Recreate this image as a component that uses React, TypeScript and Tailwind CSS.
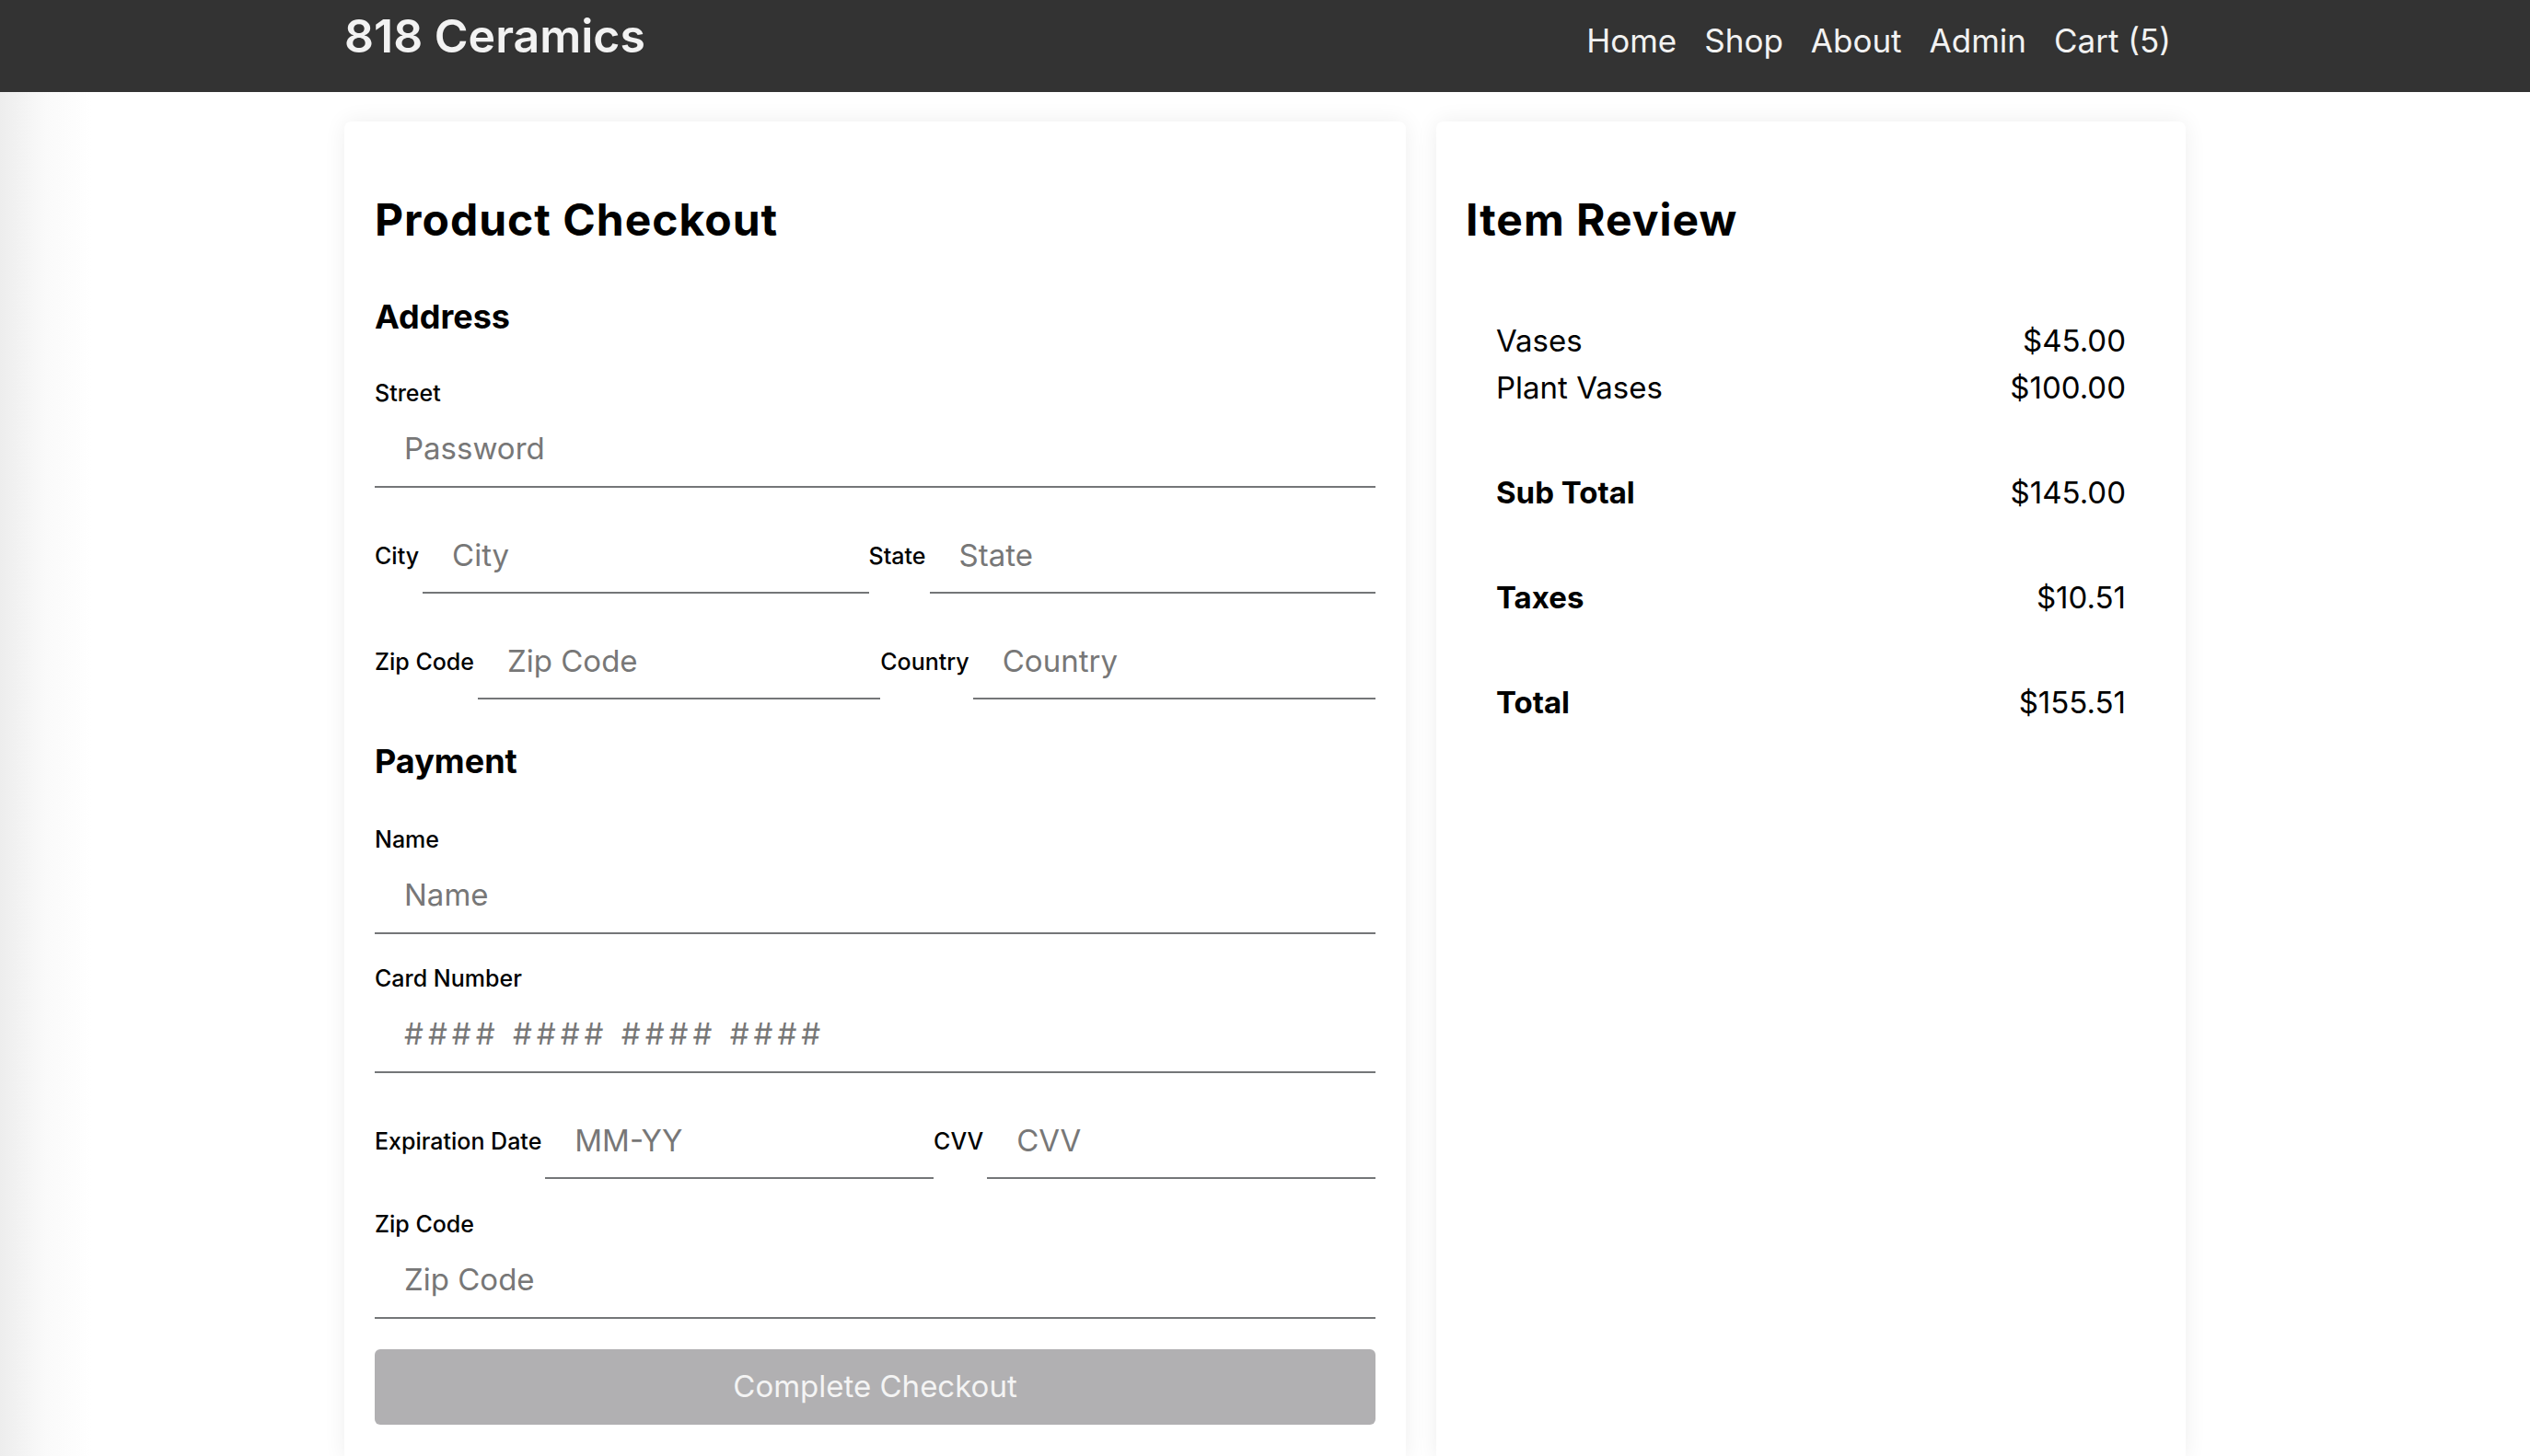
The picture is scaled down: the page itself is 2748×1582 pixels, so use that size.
import React from "react";

const font = { fontFamily: "Inter, 'Open Sans', sans-serif" };

function Field({ label, placeholder, wide }: { label: string; placeholder: string; wide?: boolean }) {
  return (
    <div className="flex flex-col">
      <label className="text-[25px] font-medium leading-[30px] text-black">{label}</label>
      <input
        placeholder={placeholder}
        className={
          "mt-[7px] h-[81px] w-full border-b-2 border-[#747678] pb-[4px] pl-[32px] text-[33px] outline-none placeholder:text-[#777] " +
          (wide ? "tracking-[5px]" : "")
        }
      />
    </div>
  );
}

function PairRow({ items }: { items: [string, string][] }) {
  return (
    <div className="flex items-center">
      {items.map(([label, ph]) => (
        <React.Fragment key={label}>
          <label className="pr-[4px] text-[25px] font-medium leading-[30px] text-black whitespace-nowrap">{label}</label>
          <input
            placeholder={ph}
            className="h-[82px] min-w-0 flex-1 border-b-2 border-[#747678] pl-[32px] text-[33px] outline-none placeholder:text-[#777]"
          />
        </React.Fragment>
      ))}
    </div>
  );
}

export default function App() {
  return (
    <div style={font} className="min-h-screen bg-white">
      {/* Header */}
      <nav className="h-[100px] bg-[#333333]">
        <div className="mx-auto flex w-[2000px] items-start justify-between">
          <div className="pt-[8px] text-[50px] font-semibold leading-[62px] text-[#f2f2f2]">818 Ceramics</div>
          <ul className="flex gap-[30px] pr-[16px] pt-[18px] text-[35px] leading-[52px] text-[#f2f2f2]">
            <li>Home</li>
            <li>Shop</li>
            <li>About</li>
            <li>Admin</li>
            <li>Cart (5)</li>
          </ul>
        </div>
      </nav>

      <main className="min-h-[1482px] bg-[linear-gradient(to_right,#ededed,#fafafa_50px,#ffffff_100px)] pb-[40px]">
        <div className="mx-auto flex w-[2000px] gap-[33px] pt-[32px]">
          {/* Checkout form */}
          <section className="w-[1153px] rounded-[8px] bg-white px-[33px] pb-[40px] pt-[79px] shadow-[0_0_24px_rgba(0,0,0,0.07)]">
            <h2 className="text-[48px] font-bold leading-[56px] tracking-[1px] text-black">Product Checkout</h2>

            <h3 className="mt-[56px] text-[36px] font-bold leading-[42px] text-black">Address</h3>
            <div className="mt-[47px]">
              <Field label="Street" placeholder="Password" />
            </div>
            <div className="mt-[33px]">
              <PairRow items={[["City", "City"], ["State", "State"]]} />
            </div>
            <div className="mt-[33px]">
              <PairRow items={[["Zip Code", "Zip Code"], ["Country", "Country"]]} />
            </div>

            <h3 className="mt-[46px] text-[36px] font-bold leading-[42px] text-black">Payment</h3>
            <div className="mt-[49px]">
              <Field label="Name" placeholder="Name" />
            </div>
            <div className="mt-[33px]">
              <Field label="Card Number" placeholder="#### #### #### ####" wide />
            </div>
            <div className="mt-[33px]">
              <PairRow items={[["Expiration Date", "MM-YY"], ["CVV", "CVV"]]} />
            </div>
            <div className="mt-[34px]">
              <Field label="Zip Code" placeholder="Zip Code" />
            </div>

            <button className="mt-[33px] h-[82px] w-full rounded-[6px] bg-[#b1b0b2] text-[33px] text-[#f4f4f4]">
              Complete Checkout
            </button>
          </section>

          {/* Item review */}
          <section className="flex-1 rounded-[8px] bg-white px-[32px] pt-[79px] shadow-[0_0_24px_rgba(0,0,0,0.07)]">
            <h2 className="text-[48px] font-bold leading-[56px] tracking-[1px] text-black">Item Review</h2>
            <div className="mt-[78px] px-[33px] text-[33px] leading-[51px] text-black">
              <div className="flex justify-between">
                <span>Vases</span>
                <span>$45.00</span>
              </div>
              <div className="flex justify-between">
                <span>Plant Vases</span>
                <span>$100.00</span>
              </div>
              <div className="mt-[63px] flex justify-between">
                <span className="font-bold">Sub Total</span>
                <span>$145.00</span>
              </div>
              <div className="mt-[63px] flex justify-between">
                <span className="font-bold">Taxes</span>
                <span>$10.51</span>
              </div>
              <div className="mt-[63px] flex justify-between">
                <span className="font-bold">Total</span>
                <span>$155.51</span>
              </div>
            </div>
          </section>
        </div>
      </main>
    </div>
  );
}
